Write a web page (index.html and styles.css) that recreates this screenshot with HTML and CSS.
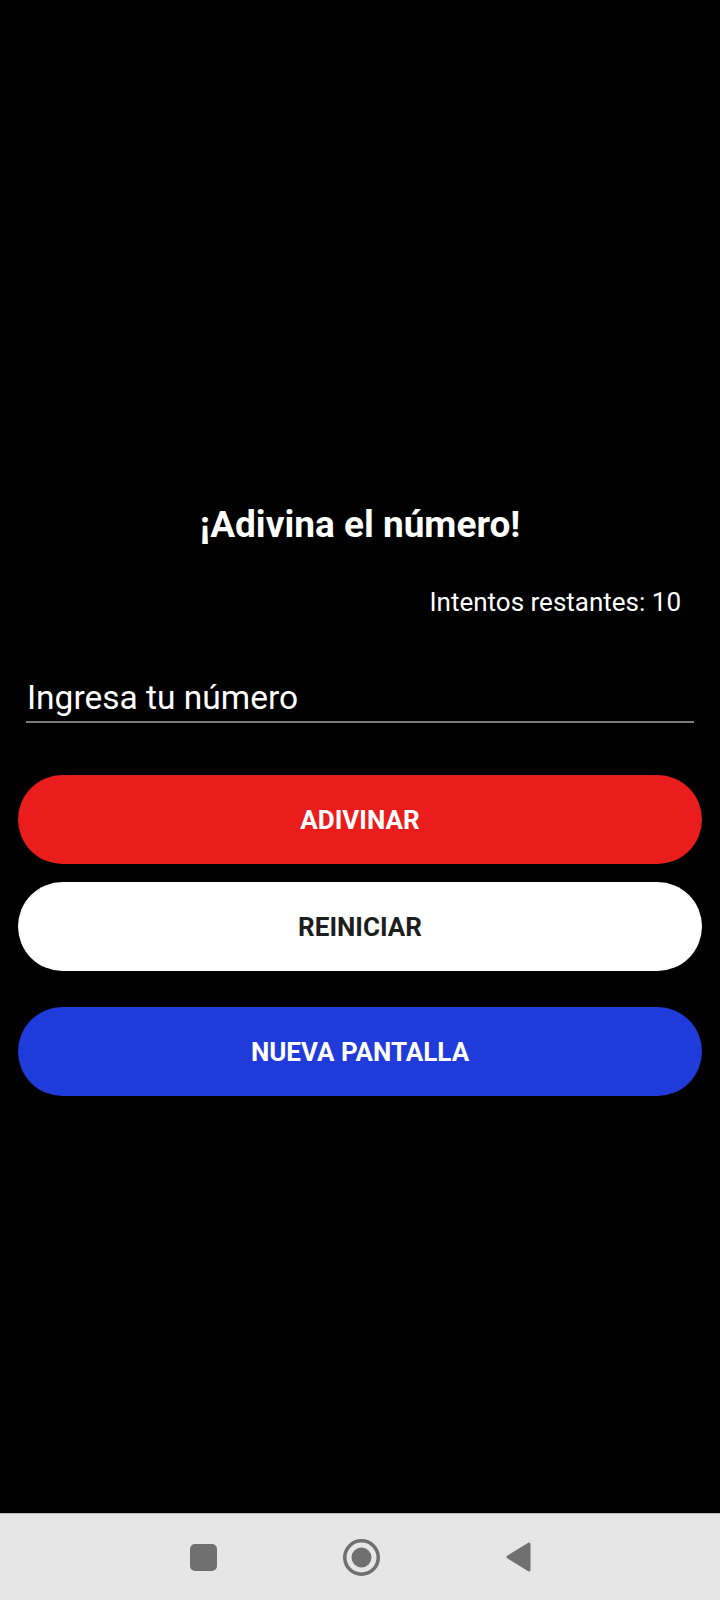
FILE: index.html
```html
<!DOCTYPE html>
<html lang="es">
<head>
<meta charset="utf-8">
<link rel="stylesheet" href="styles.css">
</head>
<body>
<div class="screen">
  <main class="content">
    <h1 class="title">¡Adivina el número!</h1>
    <p class="attempts">Intentos restantes: 10</p>
    <div class="field">Ingresa tu número</div>
    <button class="btn btn-red">ADIVINAR</button>
    <button class="btn btn-white">REINICIAR</button>
    <button class="btn btn-blue">NUEVA PANTALLA</button>
  </main>
  <nav class="navbar">
    <svg class="nav-icon" width="27" height="27" viewBox="0 0 27 27"><rect x="0" y="0" width="27" height="27" rx="5" fill="#707070"/></svg>
    <svg class="nav-icon" width="37" height="37" viewBox="0 0 37 37"><circle cx="18.5" cy="18.5" r="16.75" fill="none" stroke="#707070" stroke-width="3.5"/><circle cx="18.5" cy="18.5" r="10" fill="#707070"/></svg>
    <svg class="nav-icon" width="25" height="30" viewBox="0 0 25 30"><path d="M23 2 L2 15 L23 28 Z" fill="#707070" stroke="#707070" stroke-width="3" stroke-linejoin="round"/></svg>
  </nav>
</div>
</body>
</html>
```

FILE: styles.css
```css
* { box-sizing: border-box; }
html, body { margin: 0; padding: 0; background: #000; }
body { font-family: Roboto, "Noto Sans", sans-serif; }
.screen {
  width: 720px;
  height: 1600px;
  display: flex;
  flex-direction: column;
  background: #000;
}
.content {
  flex: 1;
  display: flex;
  flex-direction: column;
  padding: 503px 18px 0 18px;
}
.title {
  margin: 0;
  color: #fff;
  font-size: 37px;
  font-weight: 700;
  text-align: center;
  line-height: 44px;
}
.attempts {
  margin: 40px 0 0 0;
  color: #fff;
  font-size: 26px;
  line-height: 30px;
  text-align: right;
  padding-right: 21px;
}
.field {
  margin: 61px 8px 0 8px;
  color: #fff;
  font-size: 33.5px;
  line-height: 40px;
  padding: 0 1px 3px 1px;
  border-bottom: 2px solid #7a7a7a;
}
.btn {
  display: block;
  width: 100%;
  height: 89px;
  border: none;
  border-radius: 45px;
  font-family: Roboto, "Noto Sans", sans-serif;
  font-size: 26px;
  font-weight: 700;
  padding: 0;
}
.btn-red { background: #ea1c1c; color: #fff; margin-top: 52px; }
.btn-white { background: #fff; color: #1e1e1e; margin-top: 18px; }
.btn-blue { background: #1f3bd9; color: #fff; margin-top: 36px; }
.navbar {
  height: 87px;
  background: #e6e6e6;
  display: flex;
  align-items: center;
  justify-content: center;
  gap: 126px;
  border-top: 1px solid #bdbdbd;
  padding-left: 0;
}
.nav-icon { display: block; }
```
